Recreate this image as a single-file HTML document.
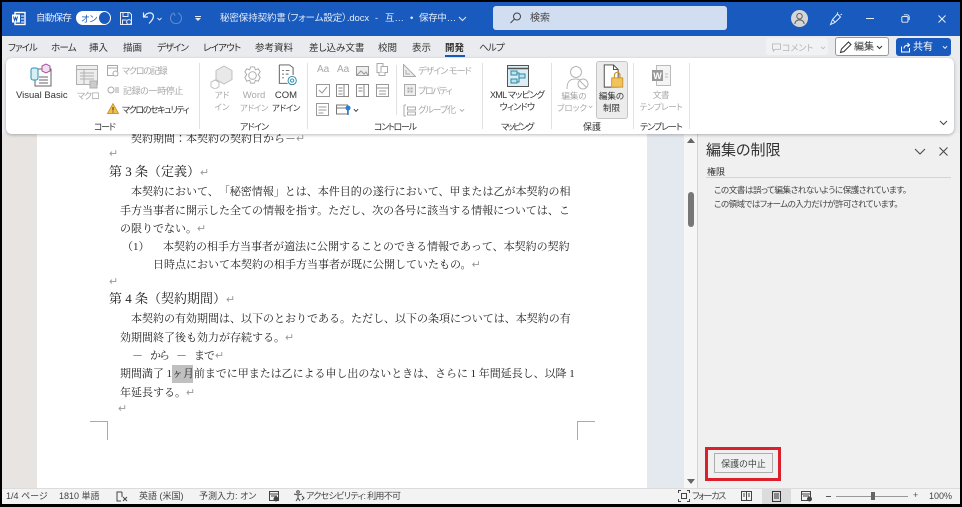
<!DOCTYPE html>
<html lang="ja"><head><meta charset="utf-8"><style>
html,body{margin:0;padding:0;background:#000}
#r{position:relative;width:962px;height:507px;overflow:hidden;background:#000;font-family:"Liberation Sans","Noto Sans CJK JP",sans-serif;color:#333;font-feature-settings:"palt";text-spacing-trim:space-all}
#r div,#r svg{position:absolute}
.t{white-space:nowrap;line-height:14px;font-size:9px}
.g{color:#a8a8a8}
.d{font-family:"Liberation Serif","Noto Serif CJK JP","Noto Serif CJK SC",serif;font-size:11px;line-height:16px;white-space:nowrap;color:#222;font-feature-settings:normal}
.h{font-size:13px;line-height:18px}
.r{color:#999}
.tab{font-size:9.5px;top:42px;line-height:14px;white-space:nowrap;color:#333}
.k{letter-spacing:-.8px}
.w{color:#e6edf8}
.sep{width:1px;background:#e1e1e1;top:63px;height:66px}
.st{font-size:9px;top:490px;line-height:13px;white-space:nowrap;color:#444}
.c{text-align:center}
.l2{line-height:12px;top:89px;font-size:8.5px}
.gl{top:120px}
</style></head><body><div id="r">
<!-- title bar -->
<div style="left:2px;top:2px;width:958px;height:34px;background:#185abd"></div>
<svg style="left:11px;top:11px" width="15" height="15" viewBox="0 0 15 15"><rect x="4" y="1.5" width="10" height="12" fill="#185abd" stroke="#fff" stroke-width="1.4"/><rect x="1" y="3.5" width="8" height="8" fill="#fff"/><path d="M2.5 5.5l1 4 1-3 1 3 1-4" stroke="#185abd" fill="none"/><path d="M10 5h3M10 8h3M10 11h3" stroke="#fff"/></svg>
<div class="t w" style="left:36px;top:12px;font-size:9.5px;letter-spacing:-.7px">自動保存</div>
<div style="left:76px;top:11px;width:35px;height:14px;background:#fff;border-radius:7px"></div>
<div class="t" style="left:81px;top:12px;color:#185abd;font-size:9px">オン</div>
<div style="left:99px;top:12px;width:11px;height:12px;border-radius:50%;background:#185abd"></div>
<svg style="left:119px;top:11px" width="14" height="15" viewBox="0 0 14 15" fill="none" stroke="#e6edf8"><path d="M1.5 1.5h9l2 2v10h-11z"/><path d="M4 1.5v4h5v-4M3.5 13v-4h4"/><circle cx="10" cy="11" r="2.4"/></svg>
<svg style="left:142px;top:11px" width="21" height="14" viewBox="0 0 21 14" fill="none" stroke="#e6edf8" stroke-width="1.2"><path d="M1.5 1.500v4.500H6M2 6C4 2 9 .5 11 3.500c1.500 3-1 6-4 9"/><path d="M15.500 7l2 2 2-2" stroke-width=".9"/></svg>
<svg style="left:169px;top:11px" width="14" height="14" viewBox="0 0 14 14" fill="none" stroke="#5f8bd0" stroke-width="1.1"><path d="M5 2a5.500 5.500 0 1 0 4 0M5 2l1 3"/></svg>
<svg style="left:194px;top:16px" width="8" height="6" viewBox="0 0 8 6" fill="#e6edf8"><path d="M1 0h6v1H1zM1 2h6L4 5z"/></svg>
<div class="t w" style="left:220px;top:12px;font-size:9.5px;letter-spacing:-.1px">秘密保持契約書（フォーム設定）.docx</div>
<div class="t w" style="left:375px;top:12px;font-size:9.5px">-</div>
<div class="t w" style="left:385px;top:12px;font-size:9.5px">互…</div>
<div class="t w" style="left:410px;top:12px;font-size:9.5px">•</div>
<div class="t w" style="left:419px;top:12px;font-size:9.5px;letter-spacing:-.3px">保存中…</div>
<svg style="left:458px;top:16px" width="9" height="6" viewBox="0 0 9 6" fill="none" stroke="#e6edf8"><path d="M1 1l3.500 3.500L8 1"/></svg>
<div style="left:493px;top:6px;width:234px;height:24px;background:#d1ddf0;border-radius:3px"></div>
<svg style="left:509px;top:12px" width="13" height="12" viewBox="0 0 12 12" fill="none" stroke="#444"><circle cx="7.500" cy="4.500" r="3.500"/><path d="M5 7l-4 4"/></svg>
<div class="t" style="left:530px;top:12px;font-size:10px;color:#444">検索</div>
<div style="left:791px;top:10px;width:17px;height:17px;border-radius:50%;background:#d6d6d6"></div>
<svg style="left:794px;top:12px" width="11" height="13" viewBox="0 0 12 14" fill="none" stroke="#555"><circle cx="6" cy="4.500" r="3"/><path d="M1 13c0-6 10-6 10 0"/></svg>
<svg style="left:829px;top:12px" width="14" height="14" viewBox="0 0 14 14" fill="none" stroke="#e6edf8"><path d="M1.500 12.500l2-5 5-5.500 3 3-5.500 5.500zM8 1.500l1-1M11.500 3l1.500-1M3.500 7.500l3 3"/></svg>
<div style="left:866px;top:18px;width:8px;height:1px;background:#e6edf8"></div>
<svg style="left:901px;top:14px" width="9" height="9" viewBox="0 0 11 11" fill="none" stroke="#e6edf8" stroke-width="1.200"><rect x="1" y="3" width="7.500" height="7" rx="1.500"/><path d="M3.500 1h4a2.500 2.500 0 0 1 2.500 2.500v4"/></svg>
<svg style="left:938px;top:15px" width="8" height="8" viewBox="0 0 8 8" stroke="#e6edf8"><path d="M.5.5l7 7M7.500.5l-7 7"/></svg>
<!-- tab strip -->
<div style="left:2px;top:36px;width:958px;height:99px;background:#e9ebee"></div>
<div class="tab k" style="left:8px;letter-spacing:-1px">ファイル</div>
<div class="tab k" style="left:51px">ホーム</div>
<div class="tab" style="left:89px">挿入</div>
<div class="tab" style="left:123px">描画</div>
<div class="tab k" style="left:157px;letter-spacing:-1px">デザイン</div>
<div class="tab k" style="left:203px">レイアウト</div>
<div class="tab" style="left:255px">参考資料</div>
<div class="tab" style="left:309px">差し込み文書</div>
<div class="tab" style="left:378px">校閲</div>
<div class="tab" style="left:412px">表示</div>
<div class="tab" style="left:445px;font-weight:bold;color:#333">開発</div>
<div style="left:445px;top:55px;width:20px;height:2px;background:#185abd"></div>
<div class="tab k" style="left:479px">ヘルプ</div>
<div style="left:766px;top:38px;width:62px;height:17px;background:#f1f2f4;border-radius:3px"></div>
<svg style="left:772px;top:43px" width="9" height="9" viewBox="0 0 10 10" fill="none" stroke="#bbb"><path d="M.5 1h9v6h-6l-2 2V7h-1z"/></svg>
<div class="t" style="left:782px;top:41px;color:#b5b5b5;font-size:9px">コメント</div>
<svg style="left:820px;top:46px" width="6" height="4" viewBox="0 0 7 5" fill="none" stroke="#bbb"><path d="M1 1l2.500 2.500L6 1"/></svg>
<div style="left:835px;top:37px;width:52px;height:17px;background:#fff;border:1px solid #999;border-radius:3px"></div>
<svg style="left:839px;top:41px" width="13" height="13" viewBox="0 0 13 13" fill="none" stroke="#333"><path d="M1.500 11.500l1-3.500 7-7 2.500 2.500-7 7z"/></svg>
<div class="t" style="left:854px;top:41px;font-size:10px">編集</div>
<svg style="left:876px;top:45px" width="7" height="5" viewBox="0 0 7 5" fill="none" stroke="#333"><path d="M1 1l2.500 2.500L6 1"/></svg>
<div style="left:896px;top:38px;width:55px;height:18px;background:#185abd;border-radius:3px"></div>
<svg style="left:900px;top:42px" width="11" height="11" viewBox="0 0 11 11" fill="none" stroke="#fff"><path d="M1.500 4.500v5.500h8V6M4 6.500C4 4 6 3 9 3M7.500 1l2 2-2 2"/></svg>
<div class="t" style="left:913px;top:41px;font-size:10px;color:#fff">共有</div>
<svg style="left:942px;top:45px" width="6" height="5" viewBox="0 0 7 5" fill="none" stroke="#fff"><path d="M1 1l2.500 2.500L6 1"/></svg>
<!-- document area -->
<div style="left:2px;top:133px;width:35px;height:355px;background:#e8e4e2"></div>
<div style="left:37px;top:133px;width:610px;height:355px;background:#fff"></div>
<div style="left:647px;top:133px;width:37px;height:355px;background:#e4e9f0"></div>
<div style="left:684px;top:133px;width:14px;height:355px;background:#f6f6f6"></div>
<div style="left:697px;top:133px;width:263px;height:355px;background:#f0f0f0;border-left:1px solid #d5d5d5;box-sizing:border-box"></div>
<svg style="left:687px;top:138px" width="8" height="5" viewBox="0 0 8 5" fill="#666"><path d="M4 0l4 5H0z"/></svg>
<div style="left:688px;top:192px;width:6px;height:35px;background:#777;border-radius:3px"></div>
<svg style="left:687px;top:479px" width="8" height="5" viewBox="0 0 8 5" fill="#666"><path d="M0 0h8L4 5z"/></svg>
<!-- Doc text -->
<div class="d" style="left:131px;top:131px">契約期間：本契約の契約日から－<span class="r">↵</span></div>
<div class="d r" style="left:109px;top:146px">↵</div>
<div class="d h" style="left:109px;top:163px">第 3 条（定義）<span class="r" style="font-size:11px">↵</span></div>
<div class="d" style="left:131px;top:184px">本契約において、「秘密情報」とは、本件目的の遂行において、甲または乙が本契約の相</div>
<div class="d" style="left:120px;top:203px">手方当事者に開示した全ての情報を指す。ただし、次の各号に該当する情報については、こ</div>
<div class="d" style="left:120px;top:221px">の限りでない。<span class="r">↵</span></div>
<div class="d" style="left:122px;top:239px">（1）</div>
<div class="d" style="left:163px;top:239px">本契約の相手方当事者が適法に公開することのできる情報であって、本契約の契約</div>
<div class="d" style="left:153px;top:257px">日時点において本契約の相手方当事者が既に公開していたもの。<span class="r">↵</span></div>
<div class="d r" style="left:109px;top:274px">↵</div>
<div class="d h" style="left:109px;top:290px">第 4 条（契約期間）<span class="r" style="font-size:11px">↵</span></div>
<div class="d" style="left:131px;top:311px">本契約の有効期間は、以下のとおりである。ただし、以下の条項については、本契約の有</div>
<div class="d" style="left:120px;top:330px">効期間終了後も効力が存続する。<span class="r">↵</span></div>
<div class="d" style="left:132px;top:348px">－</div>
<div class="d" style="left:150px;top:348px;letter-spacing:-2px">から</div>
<div class="d" style="left:176px;top:348px">－</div>
<div class="d" style="left:194px;top:348px;letter-spacing:-1px">まで</div>
<div class="d r" style="left:215px;top:348px">↵</div>
<div style="left:172px;top:365px;width:21px;height:18px;background:#c0c0c0"></div>
<div class="d" style="left:120px;top:366px;letter-spacing:-.04px">期間満了 1ヶ月前までに甲または乙による申し出のないときは、さらに 1 年間延長し、以降 1</div>
<div class="d" style="left:120px;top:385px">年延長する。<span class="r">↵</span></div>
<div class="d r" style="left:118px;top:401px">↵</div>
<div style="left:90px;top:421px;width:17px;height:18px;border-right:1px solid #aaa;border-top:1px solid #aaa"></div>
<div style="left:577px;top:421px;width:17px;height:18px;border-left:1px solid #aaa;border-top:1px solid #aaa"></div>
<!-- ribbon card -->
<div style="left:6px;top:58px;width:948px;height:76px;background:#fff;border-radius:6px;box-shadow:0 1px 3px rgba(0,0,0,.28)"></div>
<div class="sep" style="left:199px"></div>
<div class="sep" style="left:307px"></div>
<div class="sep" style="left:482px"></div>
<div class="sep" style="left:551px"></div>
<div class="sep" style="left:633px"></div>
<div class="sep" style="left:689px"></div>
<div class="sep" style="left:396px;top:65px;height:50px"></div>
<!-- Code group -->
<svg style="left:29px;top:63px" width="24" height="24" viewBox="0 0 24 24" fill="none" stroke="#666"><rect x="6" y="6" width="16" height="17" fill="#fff"/><path d="M10 14h9M10 17h9M10 20h9"/><rect x="2" y="5" width="7" height="12" rx="2" fill="#d6eef6" stroke="#2b93b5"/><path d="M13 3l4-2 4 2v5l-4 2-4-2z" fill="#f1dff0" stroke="#a6509e"/></svg>
<div class="t" style="left:16px;top:89px;font-size:9.5px;color:#333">Visual Basic</div>
<svg style="left:76px;top:65px" width="23" height="24" viewBox="0 0 23 24" fill="#eee" stroke="#b0b0b0"><rect x=".5" y=".5" width="21" height="19"/><path d="M.5 4.500h21M4 8h14M4 11h14M4 14h14M8 5v14" fill="none"/><rect x="14" y="16" width="7" height="7" fill="#ccc"/></svg>
<div class="t g" style="left:77px;top:89px;letter-spacing:-1px">マクロ</div>
<svg style="left:107px;top:65px" width="12" height="12" viewBox="0 0 12 12" fill="none" stroke="#aaa"><rect x=".5" y=".5" width="10" height="10"/><path d="M.5 3h10"/><circle cx="8.500" cy="8.500" r="2.500" fill="#fff"/></svg>
<div class="t g" style="left:122px;top:64px;letter-spacing:-1.2px">マクロの記録</div>
<svg style="left:107px;top:85px" width="14" height="10" viewBox="0 0 14 10" fill="none" stroke="#aaa"><circle cx="4" cy="5" r="3"/><path d="M9 2v6M11 2v6"/></svg>
<div class="t g" style="left:123px;top:84px;letter-spacing:-.4px">記録の一時停止</div>
<svg style="left:107px;top:103px" width="12" height="11" viewBox="0 0 12 11"><path d="M6 .5l5.500 10H.5z" fill="#f5c044" stroke="#b8801a" stroke-width=".7"/><path d="M6 4v3.500M6 8.500v1" stroke="#333"/></svg>
<div class="t" style="left:122px;top:103px;color:#333;letter-spacing:-1.4px">マクロのセキュリティ</div>
<div class="t gl" style="left:94px;letter-spacing:-1.3px">コード</div>
<!-- Add-ins -->
<svg style="left:210px;top:65px" width="24" height="24" viewBox="0 0 24 24" fill="#e9e9e9" stroke="#c0c0c0"><path d="M14 1l8 4.500v9l-8 4.500-8-4.500v-9z"/><path d="M5 15l4 2.200v4.500L5 24l-4-2.300v-4.500z" fill="#fff"/></svg>
<div class="t g c l2" style="left:207px;width:30px">アド<br>イン</div>
<svg style="left:242px;top:65px" width="21" height="22" viewBox="0 0 22 23" fill="none" stroke="#aaa"><path d="M9 1h4l1 3 3-1 2 3-2 3 2 3-2 4-3-1-1 3H9l-1-3-3 1-2-4 2-3-2-3 2-3 3 1z" transform="translate(0 1)"/><circle cx="11" cy="11" r="4"/></svg>
<div class="t g c l2" style="left:234px;width:40px"><span style="font-size:9.5px">Word</span><br><span style="letter-spacing:-.4px">アドイン</span></div>
<svg style="left:278px;top:64px" width="21" height="23" viewBox="0 0 22 25" fill="none" stroke="#555"><path d="M1 1h11l4 3v8M1 1v20h9"/><path d="M4 7h2M4 11h2M4 15h2M8 7h4M8 11h3" stroke="#666"/><circle cx="15" cy="18" r="4.500" stroke="#2c86a8"/><circle cx="15" cy="18" r="1.800" stroke="#2c86a8"/></svg>
<div class="t c l2" style="left:266px;width:40px"><span style="font-size:9.5px">COM</span><br><span style="letter-spacing:-.4px">アドイン</span></div>
<div class="t gl" style="left:240px;letter-spacing:-.8px">アドイン</div>
<!-- Controls -->
<div class="t g" style="left:317px;top:63px;font-size:10px">Aa</div>
<div class="t g" style="left:337px;top:63px;font-size:10px">Aa</div>
<svg style="left:356px;top:66px" width="13" height="10" viewBox="0 0 13 10" fill="#eee" stroke="#999"><rect x=".5" y=".5" width="12" height="9"/><path d="M1 9l4-4 3 3 2-2 2 3" fill="none"/></svg>
<svg style="left:376px;top:63px" width="12" height="13" viewBox="0 0 12 13" fill="#fff" stroke="#aaa"><rect x="1" y=".5" width="6" height="9"/><rect x="5" y="3.500" width="6.500" height="6"/><path d="M3 9.500v3h6v-3"/></svg>
<svg style="left:316px;top:84px" width="14" height="13" viewBox="0 0 14 13" fill="none" stroke="#999"><rect x=".5" y=".5" width="13" height="12"/><path d="M3 6l3 3 5-6"/></svg>
<svg style="left:336px;top:84px" width="13" height="13" viewBox="0 0 13 13" fill="none" stroke="#888"><rect x=".5" y=".5" width="12" height="12"/><path d="M8 .5v12M2.500 4h4M2.500 7h4M2.500 10h4"/></svg>
<svg style="left:356px;top:84px" width="13" height="13" viewBox="0 0 13 13" fill="none" stroke="#888"><rect x=".5" y=".5" width="12" height="12"/><path d="M8 .5v12M2.500 4h4M2.500 7h4"/></svg>
<svg style="left:376px;top:84px" width="13" height="13" viewBox="0 0 13 13" fill="none" stroke="#999"><rect x=".5" y=".5" width="12" height="12"/><path d="M.5 4h12M3 7h7M3 10h7"/></svg>
<svg style="left:316px;top:103px" width="13" height="13" viewBox="0 0 13 13" fill="none" stroke="#999"><rect x=".5" y=".5" width="12" height="12"/><path d="M2.500 4h8M2.500 7h8M2.500 10h5"/></svg>
<svg style="left:336px;top:102px" width="16" height="14" viewBox="0 0 16 14" fill="none" stroke="#777"><rect x=".5" y="3" width="11" height="9"/><path d="M.5 6h11"/><circle cx="12" cy="6" r="2.500" fill="#2b7cd3" stroke="none"/><path d="M12 8v5" stroke="#2b7cd3" stroke-width="1.500"/></svg>
<svg style="left:353px;top:108px" width="6" height="5" viewBox="0 0 7 5" fill="none" stroke="#333"><path d="M1 1l2.500 2.500L6 1"/></svg>
<svg style="left:403px;top:64px" width="13" height="13" viewBox="0 0 13 13" fill="#eee" stroke="#aaa"><path d="M.5.500l12 12H.5z"/><path d="M3 6v4h4" fill="none"/></svg>
<div class="t g" style="left:418px;top:64px;letter-spacing:-.9px">デザイン モード</div>
<svg style="left:404px;top:84px" width="12" height="12" viewBox="0 0 12 12" fill="#eee" stroke="#aaa"><rect x=".5" y=".5" width="11" height="11"/><path d="M4 4h1v1H4zM4 7h1v1H4zM7 4h1v1H7zM7 7h1v1H7z"/></svg>
<div class="t g" style="left:418px;top:84px;letter-spacing:-1.4px">プロパティ</div>
<svg style="left:403px;top:104px" width="13" height="13" viewBox="0 0 13 13" fill="none" stroke="#aaa"><path d="M1 1v11M1 1h2M1 12h2M4.500 3h8v3h-8zM4.500 8h8v3h-8z"/></svg>
<div class="t g" style="left:418px;top:103px;letter-spacing:-1px">グループ化</div>
<svg style="left:459px;top:108px" width="6" height="5" viewBox="0 0 7 5" fill="none" stroke="#aaa"><path d="M1 1l2.500 2.500L6 1"/></svg>
<div class="t gl" style="left:374px;letter-spacing:-1.3px">コントロール</div>
<!-- Mapping -->
<svg style="left:507px;top:65px" width="22" height="22" viewBox="0 0 22 22" fill="#dceef4" stroke="#555"><rect x=".5" y=".5" width="21" height="21"/><path d="M.5 3.500h21" stroke-width="1.500"/><rect x="4" y="6" width="6" height="4" fill="#bfe3ee" stroke="#2d8aa5"/><rect x="12" y="9" width="6" height="4" fill="#bfe3ee" stroke="#2d8aa5"/><rect x="4" y="14" width="6" height="4" fill="#bfe3ee" stroke="#2d8aa5"/><path d="M10 8h2v9h-2" fill="none" stroke="#2d8aa5"/></svg>
<div class="t c l2" style="left:484px;width:66px;font-size:9px;letter-spacing:-.7px">XML マッピング<br>ウィンドウ</div>
<div class="t gl" style="left:501px;letter-spacing:-1.6px">マッピング</div>
<!-- Protect -->
<svg style="left:566px;top:65px" width="23" height="25" viewBox="0 0 23 25" fill="none" stroke="#b5b5b5"><circle cx="10" cy="7" r="5.500"/><path d="M1 24c0-9 4-10 9-10 2 0 3 .3 4 1"/><circle cx="17" cy="19" r="5"/><path d="M13.500 15.500l7 7"/></svg>
<div class="t g c l2" style="left:556px;width:36px;top:90px">編集の<br><span style="margin-right:4px">ブロック</span></div>
<svg style="left:588px;top:105px" width="5" height="4" viewBox="0 0 7 5" fill="none" stroke="#aaa"><path d="M1 1l2.500 2.500L6 1"/></svg>
<div style="left:596px;top:61px;width:30px;height:56px;background:#ececec;border:1px solid #c4c4c4;border-radius:3px"></div>
<svg style="left:603px;top:64px" width="21" height="25" viewBox="0 0 22 27" fill="none" stroke="#444"><path d="M1 1h10l5 5v19H1z" fill="#fff"/><path d="M11 1v5h5"/><rect x="9" y="15" width="12" height="10" fill="#f2c35c" stroke="#c9962e"/><path d="M12 15v-3a3 3 0 0 1 6 0v3" stroke="#c9962e" stroke-width="1.300"/></svg>
<div class="t c l2" style="left:595px;width:33px;top:90px">編集の<br>制限</div>
<div class="t gl" style="left:583px">保護</div>
<!-- Templates -->
<svg style="left:651px;top:65px" width="20" height="22" viewBox="0 0 20 22"><rect x="5.500" y=".5" width="14" height="20" fill="#f4f4f4" stroke="#bbb"/><rect x="1" y="5" width="11" height="11" fill="#999"/><text x="2.300" y="14" font-size="9" font-weight="bold" fill="#fff" font-family="Liberation Sans">W</text><path d="M14 9h3M14 12h3" stroke="#bbb"/></svg>
<div class="t g c l2" style="left:636px;width:50px;letter-spacing:-.4px">文書<br>テンプレート</div>
<div class="t gl" style="left:640px;letter-spacing:-1px">テンプレート</div>
<svg style="left:939px;top:120px" width="9" height="6" viewBox="0 0 9 6" fill="none" stroke="#444"><path d="M1 1l3.500 3.500L8 1"/></svg>
<!-- Pane -->
<div class="t" style="left:706px;top:141px;font-size:15px;line-height:20px;color:#333">編集の制限</div>
<svg style="left:914px;top:148px" width="12" height="7" viewBox="0 0 12 7" fill="none" stroke="#444"><path d="M1 1l5 5 5-5"/></svg>
<svg style="left:939px;top:147px" width="9" height="9" viewBox="0 0 9 9" stroke="#444"><path d="M.5.500l8 8M8.500.500l-8 8"/></svg>
<div class="t" style="left:707px;top:165px;font-size:9px">権限</div>
<div style="left:706px;top:177px;width:245px;height:1px;background:#d4d4d4"></div>
<div class="t" style="left:714px;top:183px;font-size:8.6px;color:#444;letter-spacing:-.5px">この文書は誤って編集されないように保護されています。</div>
<div class="t" style="left:714px;top:197px;font-size:8.6px;color:#444;letter-spacing:-.6px">この領域ではフォームの入力だけが許可されています。</div>
<div style="left:705px;top:447px;width:70px;height:28px;border:3px solid #d9202c"></div>
<div style="left:714px;top:453px;width:57px;height:18px;border:1px solid #adadad;background:#f0f0f0"></div>
<div class="t c" style="left:714px;top:457px;width:59px;font-size:9px;color:#444">保護の中止</div>
<!-- status bar -->
<div style="left:2px;top:488px;width:958px;height:16px;background:#f3f3f3;border-top:1px solid #dcdcdc;box-sizing:border-box"></div>
<div class="st" style="left:6px">1/4 ページ</div>
<div class="st" style="left:59px">1810 単語</div>
<svg style="left:116px;top:491px" width="12" height="11" viewBox="0 0 12 11" fill="none" stroke="#444"><path d="M6 1H1v9h4M6 1v5M7 6l4 4M11 6l-4 4"/></svg>
<div class="st" style="left:139px">英語 (米国)</div>
<div class="st" style="left:199px">予測入力: オン</div>
<svg style="left:269px;top:491px" width="11" height="11" viewBox="0 0 11 11" fill="none" stroke="#444"><rect x=".5" y=".5" width="9" height="9"/><path d="M.5 3h9M2 5h6"/><circle cx="7" cy="8" r="2" fill="#444"/></svg>
<svg style="left:293px;top:490px" width="12" height="12" viewBox="0 0 12 12" fill="none" stroke="#444"><circle cx="5" cy="2" r="1.300"/><path d="M1 4l4 1 4-1M5 5v3l-2 3M5 8l2 3M9 6l2 2-2 2"/></svg>
<div class="st" style="left:306px;letter-spacing:-.7px">アクセシビリティ: 利用不可</div>
<svg style="left:678px;top:490px" width="12" height="12" viewBox="0 0 12 12" fill="none" stroke="#444"><path d="M.5 3V.5H3M9 .5h2.500V3M.5 9v2.500H3M9 11.500h2.500V9"/><rect x="3.500" y="3.500" width="5" height="5"/></svg>
<div class="st" style="left:692px;letter-spacing:-1.4px">フォーカス</div>
<svg style="left:741px;top:491px" width="11" height="10" viewBox="0 0 11 10" fill="none" stroke="#444"><rect x=".5" y=".5" width="10" height="9"/><path d="M5.500.5v9M2 3h2M2 5h2M7 3h2M7 5h2"/></svg>
<div style="left:762px;top:489px;width:29px;height:15px;background:#dcdcdc"></div>
<svg style="left:772px;top:491px" width="9" height="11" viewBox="0 0 9 11" fill="none" stroke="#333"><rect x=".5" y=".5" width="8" height="10"/><path d="M2 3h5M2 5h5M2 7h5"/></svg>
<svg style="left:801px;top:491px" width="12" height="11" viewBox="0 0 12 11" fill="none" stroke="#444"><rect x=".5" y=".5" width="9" height="9"/><path d="M.5 3h9M2 5h6"/><circle cx="8.500" cy="8" r="2" fill="#444"/></svg>
<div style="left:826px;top:496px;width:5px;height:1px;background:#555"></div>
<div style="left:836px;top:496px;width:72px;height:1px;background:#999"></div>
<div style="left:871px;top:492px;width:4px;height:8px;background:#666"></div>
<div class="st" style="left:913px;top:489px;color:#555">+</div>
<div class="st" style="left:929px">100%</div>
</div></body></html>
